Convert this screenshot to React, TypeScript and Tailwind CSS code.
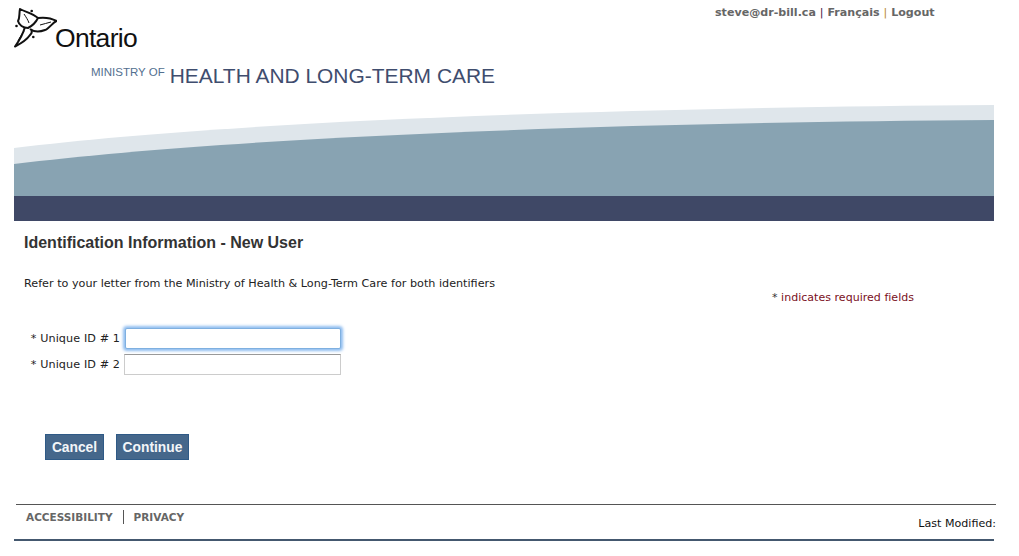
export default function App() {
  const verdana = "font-['DejaVu_Sans',sans-serif]"

  return (
    <div className="relative h-[556px] w-[1019px] overflow-hidden bg-white font-['Liberation_Sans',sans-serif]">
      {/* header */}
      <div className="flex h-[105px]">
        <div className="w-[701px] pl-[14px] pt-[8px]">
          <div className="flex h-[40px] items-end">
            <svg className="shrink-0" width="43" height="40" viewBox="0 0 43 40" fill="none" stroke="#111" strokeWidth="2" strokeLinejoin="round">
              <path d="M6 1 C11 4 18 5 24 10 C22 14 18 18 14 20 C9 20 5 17 4 13 C6 10 5 5 6 1 Z" />
              <path d="M24 10 C31 9 37 10 42.5 13 C38 15 35 21 31 22 C26 24 20 24 16 21" />
              <path d="M11 19 C9 26 5 33 1 38.5 C6 36 12 33 16 27 C18 25 18 23 17 22" />
              <path d="M4 33 C6 29 8 26 10 23" strokeWidth="1" />
              <path d="M26 17 C30 16 33 15 37 14" strokeWidth="1" />
              <path d="M10 6 C12 9 14 12 15 15" strokeWidth="1" />
              <circle cx="17.7" cy="3" r="1.3" fill="#111" stroke="none" />
              <circle cx="2.5" cy="18" r="1.3" fill="#111" stroke="none" />
              <circle cx="19.3" cy="29" r="1.3" fill="#111" stroke="none" />
            </svg>
            <span className="-ml-[2px] mb-[-5px] text-[26.5px] leading-[30px] tracking-[-0.7px] text-[#111]">Ontario</span>
          </div>
          <div className="mt-[17px] flex items-start pl-[77px]">
            <span className="text-[11.5px] leading-[14px] text-[#53708f]">MINISTRY OF</span>
            <span className="ml-[5px] -mt-[1px] text-[20.95px] leading-[24px] text-[#3f4d6e]">HEALTH AND LONG-TERM CARE</span>
          </div>
        </div>
        <div className={`${verdana} ml-[14px] w-[234px] pt-[6px] text-[11.1px] font-bold leading-[14px] text-[#666] whitespace-nowrap`}>
          <span>steve@dr-bill.ca</span> <span className="font-normal text-[#3b1040]">|</span> <span>Français</span> <span className="font-normal text-[#b8862d]">|</span> <span>Logout</span>
        </div>
      </div>

      {/* banner */}
      <div className="ml-[14px] w-[980px]">
        <svg className="block" width="980" height="91" viewBox="0 0 980 91">
          <path d="M0 43 C200 18 560 3 980 0 L980 91 L0 91 Z" fill="#dfe6eb" />
          <path d="M0 59 C200 34 560 18 980 15 L980 91 L0 91 Z" fill="#88a3b2" />
        </svg>
        <div className="h-[25px] bg-[#3f4866]"></div>
      </div>

      {/* content */}
      <div className="pl-[24px]">
        <h1 className="mt-[13px] text-[16px] font-bold leading-[18px] text-[#333]">Identification Information - New User</h1>
        <div className={`${verdana} mt-[25px] flex text-[11.2px] leading-[14px] text-[#222]`}>
          <p className="w-[748px] whitespace-nowrap">Refer to your letter from the Ministry of Health &amp; Long-Term Care for both identifiers</p>
          <p className="mt-[14px] whitespace-nowrap text-[11px] text-[#7a0f22] tracking-[0.03px]"><span className="text-[#333]">*</span> indicates required fields</p>
        </div>
        <div className={`${verdana} mt-[23px] flex flex-col gap-[5px] text-[11.2px] text-[#222]`}>
          <div className="flex items-center">
            <label className="w-[96px] whitespace-nowrap pt-[2px] text-right tracking-[0.1px]">* Unique ID # 1</label>
            <input className="ml-[5px] h-[21px] w-[216px] rounded-[2px] border border-[#7fb0e0] bg-white shadow-[0_0_3px_2px_#8fbdf0] outline-none" />
          </div>
          <div className="flex items-center">
            <label className="w-[96px] whitespace-nowrap pt-[2px] text-right tracking-[0.1px]">* Unique ID # 2</label>
            <input className="ml-[4px] h-[21px] w-[217px] border border-[#ccc] border-t-[#999] bg-white outline-none" />
          </div>
        </div>
        <div className="ml-[21px] mt-[59px] flex gap-[12px]">
          <button className="h-[26px] w-[59px] border border-[#2f5a86] bg-[#45678b] pt-[2px] text-[13.8px] font-bold text-[#f2f5f8]">Cancel</button>
          <button className="h-[26px] w-[73px] border border-[#2f5a86] bg-[#45678b] pt-[2px] text-[13.8px] font-bold text-[#f2f5f8]">Continue</button>
        </div>
      </div>

      {/* footer */}
      <div className="ml-[16px] mt-[44px] h-[35px] w-[980px] border-t border-[#555]">
        <div className="flex items-start justify-between">
          <div className={`${verdana} mt-[5px] flex items-center pl-[10px] text-[10.5px] font-bold leading-[14px] text-[#666]`}>
            <span>ACCESSIBILITY</span>
            <span className="mx-[10px] h-[14px] w-px bg-[#555]"></span>
            <span>PRIVACY</span>
          </div>
          <span className={`${verdana} mt-[12px] whitespace-nowrap text-[11.1px] leading-[14px] text-[#111]`}>Last Modified:</span>
        </div>
      </div>
      <div className="ml-[14px] h-[2px] w-[980px] bg-[#44586f]"></div>
    </div>
  )
}
